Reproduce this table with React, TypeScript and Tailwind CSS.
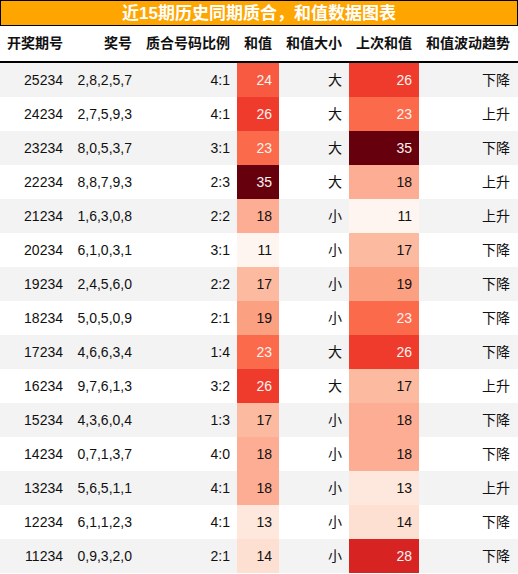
import React from "react";

type Row = [string, string, string, number, string, number, string];

const rows: Row[] = [
  ["25234", "2,8,2,5,7", "4:1", 24, "大", 26, "下降"],
  ["24234", "2,7,5,9,3", "4:1", 26, "大", 23, "上升"],
  ["23234", "8,0,5,3,7", "3:1", 23, "大", 35, "下降"],
  ["22234", "8,8,7,9,3", "2:3", 35, "大", 18, "上升"],
  ["21234", "1,6,3,0,8", "2:2", 18, "小", 11, "上升"],
  ["20234", "6,1,0,3,1", "3:1", 11, "小", 17, "下降"],
  ["19234", "2,4,5,6,0", "2:2", 17, "小", 19, "下降"],
  ["18234", "5,0,5,0,9", "2:1", 19, "小", 23, "下降"],
  ["17234", "4,6,6,3,4", "1:4", 23, "大", 26, "下降"],
  ["16234", "9,7,6,1,3", "3:2", 26, "大", 17, "上升"],
  ["15234", "4,3,6,0,4", "1:3", 17, "小", 18, "下降"],
  ["14234", "0,7,1,3,7", "4:0", 18, "小", 18, "下降"],
  ["13234", "5,6,5,1,1", "4:1", 18, "小", 13, "上升"],
  ["12234", "6,1,1,2,3", "4:1", 13, "小", 14, "下降"],
  ["11234", "0,9,3,2,0", "2:1", 14, "小", 28, "下降"],
];

const heat: Record<number, string> = {
  11: "bg-[#fff5f0] text-[#111]",
  13: "bg-[#fee7dc] text-[#111]",
  14: "bg-[#fee0d2] text-[#111]",
  17: "bg-[#fcbba1] text-[#111]",
  18: "bg-[#fcad93] text-[#111]",
  19: "bg-[#fca082] text-[#111]",
  23: "bg-[#fb6a4a] text-[#fbf3f1]",
  24: "bg-[#f75a40] text-[#fbf3f1]",
  26: "bg-[#ef3b2c] text-[#fbf3f1]",
  28: "bg-[#d72423] text-[#fbf3f1]",
  35: "bg-[#67000d] text-[#fbf3f1]",
};

const font = {
  fontFamily: '"Liberation Sans", "Noto Sans CJK SC", Arial, sans-serif',
};

const cols = "grid grid-cols-[70px_69px_98px_42px_70px_70px_99px]";

export default function App() {
  const headers = ["开奖期号", "奖号", "质合号码比例", "和值", "和值大小", "上次和值", "和值波动趋势"];
  return (
    <div className="w-[518px] h-[574px] bg-white overflow-hidden" style={font}>
      <div className="h-[26px] bg-[#ffa500] border border-black flex items-center justify-center text-white font-bold text-[17px] leading-none">
        近15期历史同期质合，和值数据图表
      </div>
      <div className={`${cols} h-[37px] border-b-2 border-black text-[14px] font-bold text-[#111]`}>
        {headers.map((h, i) => (
          <div key={i} className={`flex items-center justify-end ${i === 6 ? "pr-[8px]" : "pr-[7px]"}`}>
            {h}
          </div>
        ))}
      </div>
      {rows.map((r, idx) => (
        <div
          key={idx}
          className={`${cols} h-[34px] text-[14px] text-[#111] ${idx % 2 === 0 ? "bg-[#f3f3f3]" : "bg-white"}`}
        >
          <div className="flex items-center justify-end pr-[7px]">{r[0]}</div>
          <div className="flex items-center justify-end pr-[7px]">{r[1]}</div>
          <div className="flex items-center justify-end pr-[7px]">{r[2]}</div>
          <div className={`flex items-center justify-end pr-[7px] ${heat[r[3]]}`}>{r[3]}</div>
          <div className="flex items-center justify-end pr-[7px]">{r[4]}</div>
          <div className={`flex items-center justify-end pr-[7px] ${heat[r[5]]}`}>{r[5]}</div>
          <div className="flex items-center justify-end pr-[8px]">{r[6]}</div>
        </div>
      ))}
    </div>
  );
}
